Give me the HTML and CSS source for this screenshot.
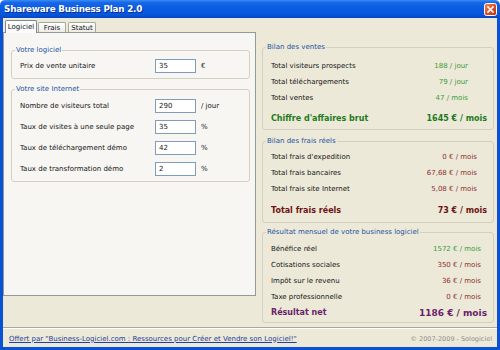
FILE: index.html
```html
<!DOCTYPE html>
<html lang="fr">
<head>
<meta charset="utf-8">
<title>Shareware Business Plan 2.0</title>
<link rel="stylesheet" href="styles.css">
</head>
<body>
<div class="window">
  <div class="titlebar">
    <span class="title">Shareware Business Plan 2.0</span>
    <span class="close">
      <svg width="13" height="13" viewBox="0 0 13 13">
        <defs>
          <linearGradient id="cg" x1="0" y1="0" x2="1" y2="1">
            <stop offset="0" stop-color="#F08A62"/>
            <stop offset="0.5" stop-color="#DE5128"/>
            <stop offset="1" stop-color="#B8320E"/>
          </linearGradient>
        </defs>
        <rect x="0.5" y="0.5" width="12" height="12" rx="2" fill="url(#cg)" stroke="#fff" stroke-width="1"/>
        <path d="M4 4 L9 9 M9 4 L4 9" stroke="#fff" stroke-width="1.6" stroke-linecap="square"/>
      </svg>
    </span>
  </div>
  <div class="frame">
    <div class="main">
      <div class="left">
        <div class="tabs">
          <span class="tab active">Logiciel</span>
          <span class="tab t2">Frais</span>
          <span class="tab t3">Statut</span>
        </div>
        <div class="panel">
          <fieldset class="grp g1">
            <legend>Votre logiciel</legend>
            <div class="frow"><span class="flabel">Prix de vente unitaire</span><span class="input">35</span><span class="unit">€</span></div>
          </fieldset>
          <fieldset class="grp g2">
            <legend>Votre site Internet</legend>
            <div class="frow"><span class="flabel">Nombre de visiteurs total</span><span class="input">290</span><span class="unit">/ jour</span></div>
            <div class="frow"><span class="flabel">Taux de visites à une seule page</span><span class="input">35</span><span class="unit">%</span></div>
            <div class="frow"><span class="flabel">Taux de téléchargement démo</span><span class="input">42</span><span class="unit">%</span></div>
            <div class="frow"><span class="flabel">Taux de transformation démo</span><span class="input">2</span><span class="unit">%</span></div>
          </fieldset>
        </div>
      </div>
      <div class="right">
        <fieldset class="grp ventes">
          <legend>Bilan des ventes</legend>
          <div class="rrow"><span>Total visiteurs prospects</span><span class="green">188 / jour</span></div>
          <div class="rrow"><span>Total téléchargements</span><span class="green">79 / jour</span></div>
          <div class="rrow"><span>Total ventes</span><span class="green">47 / mois</span></div>
          <div class="rrow big greenb"><span>Chiffre d'affaires brut</span><span class="bv">1645 € / mois</span></div>
        </fieldset>
        <fieldset class="grp frais">
          <legend>Bilan des frais réels</legend>
          <div class="rrow"><span>Total frais d'expedition</span><span class="red">0 € / mois</span></div>
          <div class="rrow"><span>Total frais bancaires</span><span class="red">67,68 € / mois</span></div>
          <div class="rrow"><span>Total frais site Internet</span><span class="red">5,08 € / mois</span></div>
          <div class="rrow big redb"><span>Total frais réels</span><span class="bv">73 € / mois</span></div>
        </fieldset>
        <fieldset class="grp result">
          <legend>Résultat mensuel de votre business logiciel</legend>
          <div class="rrow"><span>Bénéfice réel</span><span class="green">1572 € / mois</span></div>
          <div class="rrow"><span>Cotisations sociales</span><span class="red">350 € / mois</span></div>
          <div class="rrow"><span>Impôt sur le revenu</span><span class="red">36 € / mois</span></div>
          <div class="rrow"><span>Taxe professionnelle</span><span class="red">0 € / mois</span></div>
          <div class="rrow big purple"><span>Résultat net</span><span class="bv net">1186 € / mois</span></div>
        </fieldset>
      </div>
    </div>
    <div class="footer">
      <a class="link" href="#">Offert par "Business-Logiciel.com : Ressources pour Créer et Vendre son Logiciel!"</a>
      <span class="copy">© 2007-2009 - Sologiciel</span>
    </div>
  </div>
</div>
</body>
</html>
```
FILE: styles.css
```css
html, body {
  margin: 0;
  padding: 0;
  background: #ffffff;
}
body {
  width: 500px;
  height: 350px;
  font-family: "DejaVu Sans", Verdana, sans-serif;
  font-size: 7px;
  color: #151515;
}
.window {
  width: 500px;
  height: 350px;
  display: flex;
  flex-direction: column;
}
.titlebar {
  height: 18px;
  flex: none;
  box-sizing: border-box;
  display: flex;
  align-items: center;
  justify-content: space-between;
  padding: 0 3px 0 4px;
  background: linear-gradient(#3C8CF2 0%, #1767E8 14%, #0A5CE0 45%, #0756DC 80%, #0447C4 100%);
  border-radius: 5px 5px 0 0;
}
.title {
  color: #ffffff;
  font-family: "DejaVu Sans", Verdana, sans-serif;
  font-weight: bold;
  font-size: 8.8px;
  letter-spacing: -0.2px;
  text-shadow: 1px 1px 0 #0B2F8A;
}
.close {
  width: 13px;
  height: 13px;
  display: flex;
}
.frame {
  flex: 1;
  min-height: 0;
  display: flex;
  flex-direction: column;
  background: #ECE9D8;
  border: 3px solid #0A52D4;
  border-top: none;
}
.main {
  flex: 1;
  min-height: 0;
  display: flex;
}
.left {
  width: 254px;
  flex: none;
  display: flex;
  flex-direction: column;
  padding-top: 2px;
}
.tabs {
  height: 12px;
  display: flex;
  align-items: flex-end;
  padding-left: 2px;
}
.tab {
  box-sizing: border-box;
  height: 10px;
  width: 28px;
  display: flex;
  align-items: center;
  justify-content: center;
  border: 1px solid #A4A89C;
  border-bottom: none;
  border-radius: 2px 2px 0 0;
  background: linear-gradient(#FFFFFF, #ECEBE5);
  font-size: 7px;
  color: #111;
}
.tab.active {
  width: 32px;
  height: 13px;
  margin-bottom: -1px;
  position: relative;
  background: #FCFCFE;
  border-color: #7F8588;
}
.tab.t2 { margin-left: 1px; }
.tab.t3 { margin-left: 2px; }
.panel {
  width: 253px;
  height: 264px;
  box-sizing: border-box;
  border: 1px solid #919B9C;
  background: #F7F6F2;
  padding: 12px 5px 0 7px;
}
.grp {
  margin: 0;
  min-width: 0;
  border: 1px solid #D3D0C1;
  border-radius: 3px;
  padding: 0 3px;
}
.grp legend {
  padding: 0 1px;
  line-height: 10px;
  font-size: 7px;
  color: #2453A3;
}
.g1 { padding-top: 1px; padding-bottom: 2px; }
.g2 { margin-top: 5px; padding-top: 1px; padding-bottom: 2px; }
.frow {
  display: flex;
  align-items: center;
  height: 20px;
  padding-left: 5px;
}
.g2 .frow { height: 21px; }
.flabel {
  width: 135px;
  flex: none;
}
.input {
  box-sizing: border-box;
  width: 41px;
  height: 14px;
  border: 1px solid #7F9DB9;
  background: #ffffff;
  padding-left: 3px;
  line-height: 12px;
}
.unit { margin-left: 5px; }

.right {
  flex: 1;
  padding: 24px 3px 0 5px;
}
.rrow {
  display: flex;
  justify-content: space-between;
  align-items: center;
  height: 16px;
  padding-left: 5px;
}
.ventes { padding-top: 6px; padding-bottom: 0; }
.ventes .rrow { padding-right: 22px; }
.frais { margin-top: 6px; padding-top: 3px; padding-bottom: 1px; }
.frais .rrow { padding-right: 13px; }
.result { margin-top: 4px; padding-top: 4px; padding-bottom: 2px; }
.result .rrow { padding-right: 9px; }
.rrow.big {
  font-weight: bold;
  font-size: 8px;
  padding-right: 3px;
}
.ventes .big { height: 22px; margin-top: 1px; padding-right: 3px; }
.frais .big { height: 22px; margin-top: 2px; padding-right: 3px; }
.result .big { height: 15px; padding-right: 3px; }
.green { color: #3C9A3C; }
.red { color: #8E2F2F; }
.greenb { color: #1E7A1E; }
.redb { color: #6E1414; }
.purple { color: #6A1F6A; }
.net { font-size: 9px; }

.footer {
  height: 20px;
  box-sizing: border-box;
  flex: none;
  display: flex;
  justify-content: space-between;
  align-items: center;
  border-top: 1px solid #ACA899;
  box-shadow: inset 0 1px 0 #ffffff;
  padding: 2px 5px 0 6px;
}
.link {
  color: #1F3EA0;
  text-decoration: underline;
  font-size: 7px;
}
.copy {
  color: #8E8E8E;
  font-size: 6.5px;
}
```
